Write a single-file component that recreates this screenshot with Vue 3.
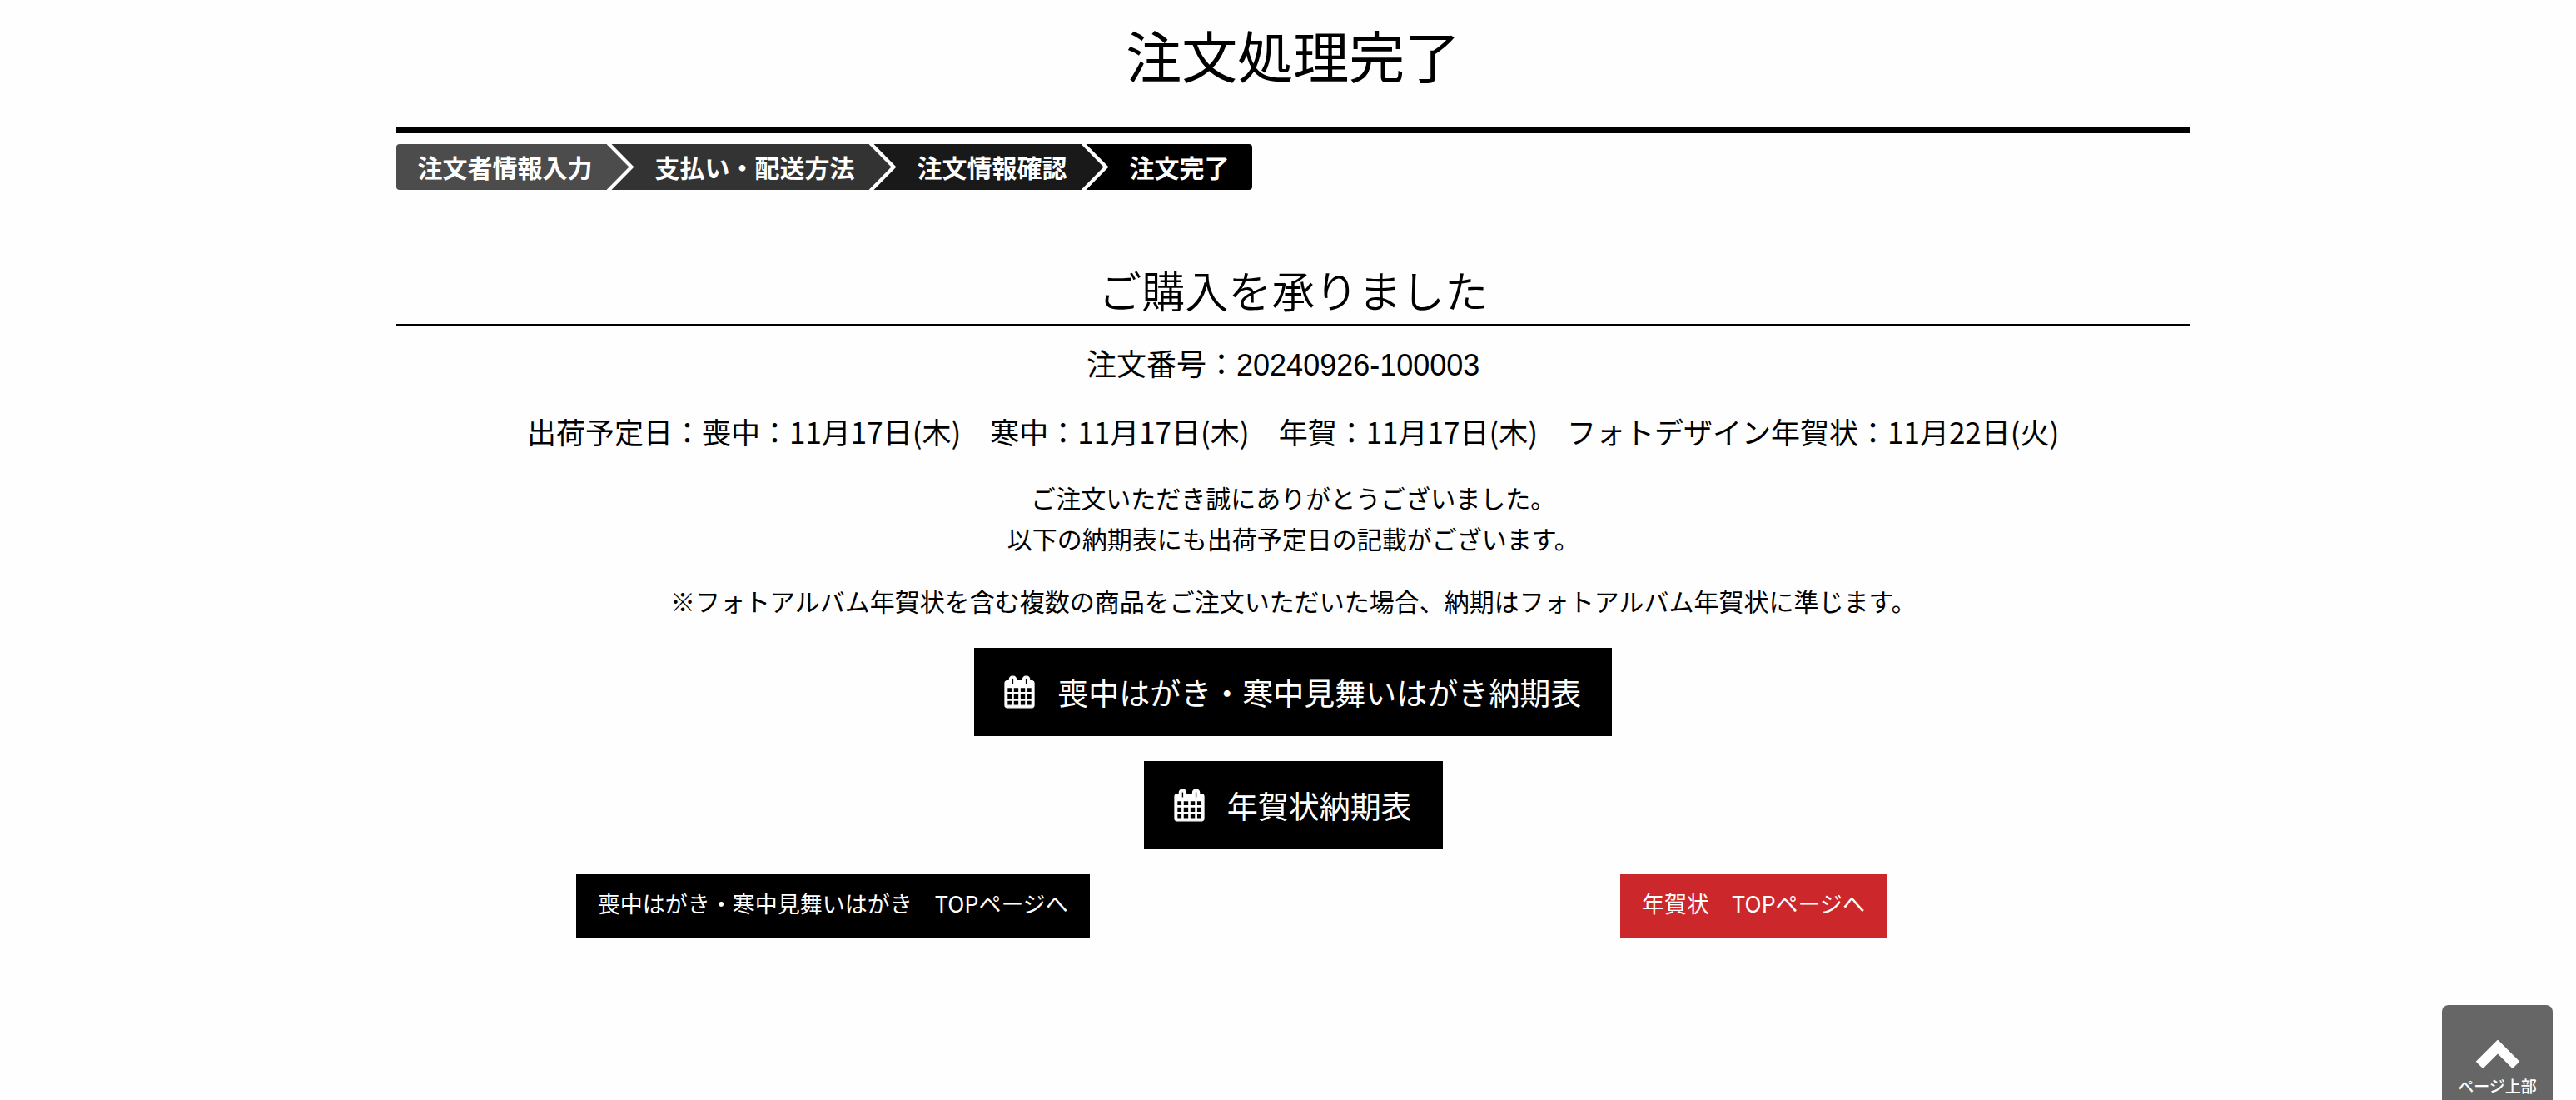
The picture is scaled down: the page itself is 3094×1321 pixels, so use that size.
<script setup>
const steps = [
  { label: '注文者情報入力', tone: 'tone-1' },
  { label: '支払い・配送方法', tone: 'tone-2' },
  { label: '注文情報確認', tone: 'tone-3' },
  { label: '注文完了', tone: 'tone-4' },
]

const schedules = ['喪中はがき・寒中見舞いはがき納期表', '年賀状納期表']
</script>

<template>
  <main class="page" lang="ja">
    <h1 class="title">注文処理完了</h1>

    <ol class="steps">
      <li v-for="step in steps" :key="step.label" class="step" :class="step.tone">{{ step.label }}</li>
    </ol>

    <h2 class="subtitle">ご購入を承りました</h2>

    <p class="order">注文番号：<span class="order-number">20240926-100003</span></p>
    <p class="shipping">出荷予定日：喪中：11月17日(木)　寒中：11月17日(木)　年賀：11月17日(木)　フォトデザイン年賀状：11月22日(火)</p>
    <p class="thanks">ご注文いただき誠にありがとうございました。<br />以下の納期表にも出荷予定日の記載がございます。</p>
    <p class="note">※フォトアルバム年賀状を含む複数の商品をご注文いただいた場合、納期はフォトアルバム年賀状に準じます。</p>

    <nav class="schedules">
      <a v-for="name in schedules" :key="name" class="schedule" href="#">
        <svg class="calendar" viewBox="0 0 1664 1792" aria-hidden="true">
          <path
            fill="currentColor"
            stroke="currentColor"
            stroke-width="60"
            d="M128 1664h288v-288H128v288zm352 0h320v-288H480v288zM128 1312h288V992H128v320zm352 0h320V992H480v320zM128 928h288V640H128v288zm736 736h320v-288H864v288zM480 928h320V640H480v288zm768 736h288v-288h-288v288zM864 1312h320V992H864v320zM512 448V160q0-13-9.500-22.500T480 128h-64q-13 0-22.500 9.500T384 160v288q0 13 9.500 22.500T416 480h64q13 0 22.500-9.500T512 448zm736 864h288V992h-288v320zM864 928h320V640H864v288zm384 0h288V640h-288v288zm32-480V160q0-13-9.500-22.500T1248 128h-64q-13 0-22.500 9.500T1152 160v288q0 13 9.500 22.500t22.500 9.500h64q13 0 22.500-9.500T1280 448zm384-64v1280q0 52-38 90t-90 38H128q-52 0-90-38t-38-90V384q0-52 38-90t90-38h128v-96q0-66 47-113T416 0h64q66 0 113 47t47 113v96h384v-96q0-66 47-113t113-47h64q66 0 113 47t47 113v96h128q52 0 90 38t38 90z"
          />
        </svg>
        <span>{{ name }}</span>
      </a>
    </nav>

    <nav class="top-links">
      <a class="top-link" href="#">喪中はがき・寒中見舞いはがき　TOPページへ</a>
      <a class="top-link red" href="#">年賀状　TOPページへ</a>
    </nav>

    <a class="page-top" href="#">
      <svg class="chevron" viewBox="0 0 54 35" aria-hidden="true">
        <path d="M5 30 27 8l22 22" fill="none" stroke="currentColor" stroke-width="12" />
      </svg>
      <span>ページ上部</span>
    </a>
  </main>
</template>

<style>
body {
  background: #fefefe;
}
</style>

<style scoped>
.page {
  padding: 15px 15% 60px 15.4%;
  color: #000;
  font-family: "Noto Sans CJK JP", sans-serif;
  text-align: center;
}

h1,
h2,
p,
ol {
  margin: 0;
  padding: 0;
  font-weight: 400;
}

a {
  color: #fff;
  text-decoration: none;
}

.title {
  padding-bottom: 38px;
  border-bottom: 7px solid #000;
  font-size: 67px;
  line-height: 100px;
}

.steps {
  display: flex;
  width: max-content;
  margin-top: 13px;
  border-radius: 4px;
  overflow: hidden;
  list-style: none;
}

.step {
  position: relative;
  padding: 0 17px 0 58px;
  background: var(--tone);
  color: #fff;
  font-size: 30px;
  font-weight: 700;
  line-height: 55px;
}

.step:first-child {
  padding-left: 25px;
}

.step:last-child {
  padding-right: 28px;
}

.step + .step::before,
.step + .step::after {
  content: "";
  position: absolute;
  top: 0;
  bottom: 0;
  left: -2px;
}

.step + .step::before {
  width: 35px;
  background: #fff;
  clip-path: polygon(2px 0, 8px 0, 100% 50%, 8px 100%, 2px 100%);
}

.step + .step::after {
  width: 29px;
  background: var(--previous);
  clip-path: polygon(0 0, 2px 0, 100% 50%, 2px 100%, 0 100%);
}

.tone-1 {
  --tone: #4c4c4c;
}

.tone-2 {
  --tone: #333;
  --previous: #4c4c4c;
}

.tone-3 {
  --tone: #191919;
  --previous: #333;
}

.tone-4 {
  --tone: #000;
  --previous: #191919;
}

.subtitle {
  margin-top: 90px;
  padding-bottom: 11px;
  border-bottom: 2px solid #000;
  font-size: 52px;
  font-weight: 350;
  line-height: 60px;
}

.order,
.shipping {
  line-height: 54px;
}

.order {
  margin-top: 17px;
  padding-right: 24px;
  font-size: 36px;
}

.order-number {
  font-family: "Liberation Sans", sans-serif;
  line-height: 1;
}

.shipping {
  margin-top: 29px;
  font-size: 35px;
}

.thanks,
.note {
  font-size: 30px;
  line-height: 49px;
}

.thanks {
  margin-top: 28px;
}

.note {
  margin-top: 26px;
}

.schedules {
  display: flex;
  flex-direction: column;
  align-items: center;
  gap: 30px;
  margin-top: 32px;
}

.schedule {
  display: flex;
  align-items: center;
  gap: 28px;
  padding: 0 37px;
  background: #000;
  font-size: 37px;
  line-height: 106px;
}

.calendar {
  width: 35px;
  height: 38px;
  overflow: visible;
}

.top-links {
  display: grid;
  grid-template-columns: 1fr 1fr;
  gap: 58px;
  justify-items: center;
  margin-top: 30px;
}

.top-link {
  padding: 0 26px 6px;
  background: #000;
  font-size: 27px;
  line-height: 70px;
}

.top-link.red {
  background: #cc282b;
}

.page-top {
  position: fixed;
  right: 28px;
  bottom: 0;
  display: flex;
  flex-direction: column;
  align-items: center;
  gap: 2px;
  width: 133px;
  padding-top: 42px;
  border-radius: 8px 8px 0 0;
  background: #666;
  font-size: 19px;
  font-weight: 500;
  line-height: 35px;
}

.chevron {
  width: 54px;
  height: 35px;
}
</style>
